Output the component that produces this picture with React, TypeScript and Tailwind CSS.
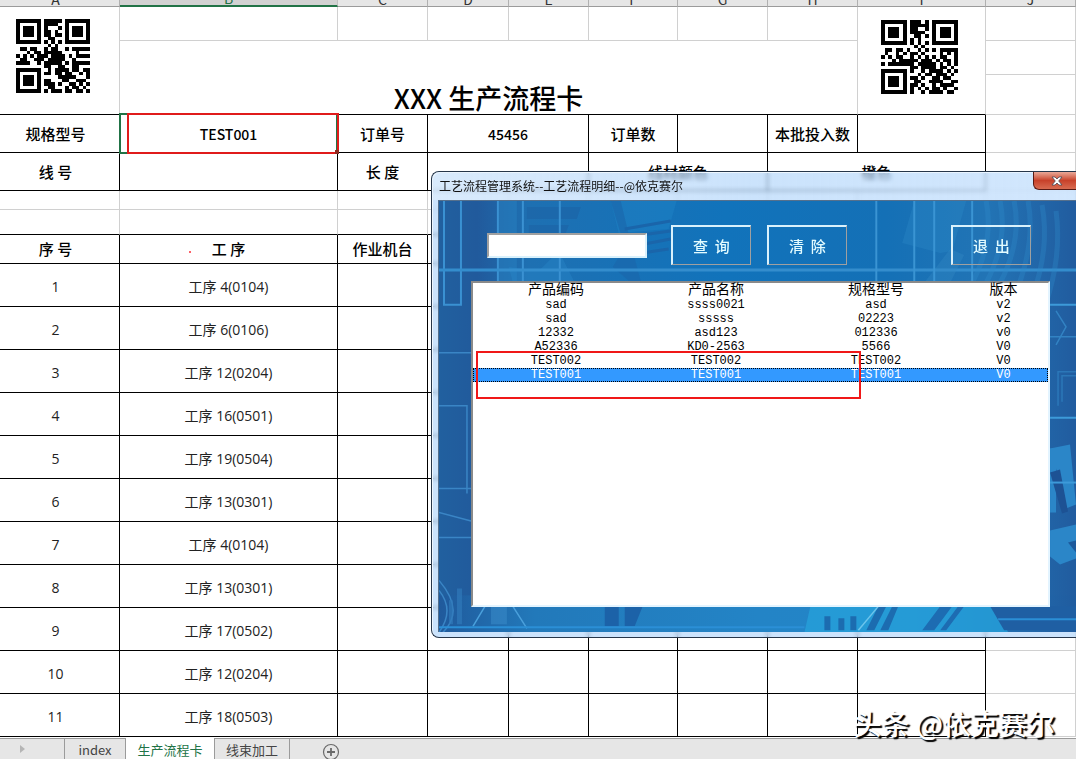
import { Fragment, type ReactNode } from 'react';

const QR_MODEL = [
    '111111101111101111111',
    '100000101111001000001',
    '101110101000101011101',
    '101110101101001011101',
    '101110101101101011101',
    '100000100110001000001',
    '111111101010101111111',
    '000000000101000000000',
    '011011001011001011111',
    '000101101111100001000',
    '101010111011110101111',
    '011001110111110010000',
    '111100101111101011111',
    '000000001100110011000',
    '111111100101111011011',
    '100000101101101100101',
    '101110100000111110001',
    '101110101100011001110',
    '101110101110100110101',
    '100000100110001011010',
    '111111101011101101101',
];

const QR_ORDER = [
    '111111101110101111111',
    '100000101111101000001',
    '101110101100101011101',
    '101110101111001011101',
    '101110100110101011101',
    '100000101010001000001',
    '111111101010101111111',
    '000000000101000000000',
    '011011010010101011111',
    '010010101101000010101',
    '101011001010101011001',
    '000101111101110101101',
    '101111111011111010101',
    '000000001101111011010',
    '111111101001011110101',
    '100000100010110111010',
    '101110101101001101100',
    '101110100110011110011',
    '101110101101001011110',
    '100000101010101101001',
    '111111101001011110110',
];

function QrCode({ rows, label }: { rows: string[]; label: string }) {
    return (
        <svg
            viewBox="0 0 21 21"
            preserveAspectRatio="none"
            shapeRendering="crispEdges"
            role="img"
            aria-label={label}
            className="w-full h-full"
        >
            {rows.map((row, y) => (
                <Fragment key={y}>
                    {row.split('').map((bit, x) =>
                        bit === '1' ? <rect key={x} x={x} y={y} width="1" height="1" /> : null
                    )}
                </Fragment>
            ))}
        </svg>
    );
}

const steps = [
    '工序 4(0104)',
    '工序 6(0106)',
    '工序 12(0204)',
    '工序 16(0501)',
    '工序 19(0504)',
    '工序 13(0301)',
    '工序 4(0104)',
    '工序 13(0301)',
    '工序 17(0502)',
    '工序 12(0204)',
    '工序 18(0503)',
];

const products = [
    ['sad', 'ssss0021', 'asd', 'v2'],
    ['sad', 'sssss', '02223', 'v2'],
    ['12332', 'asd123', '012336', 'v0'],
    ['A52336', 'KD0-2563', '5566', 'V0'],
    ['TEST002', 'TEST002', 'TEST002', 'V0'],
    ['TEST001', 'TEST001', 'TEST001', 'V0'],
];

const columns = ['A', 'B', 'C', 'D', 'E', 'F', 'G', 'H', 'I', 'J'];

const grid = 'p-0 border-r border-b border-[#d0d0d0]';
const line = 'p-0 border-r border-b border-black text-center leading-5';
const step = "p-0 pt-1 border-r border-b border-black text-center text-sm leading-5 font-['Open_Sans','Noto_Sans_CJK_SC',sans-serif]";

function Sheet() {
    return (
        <table className="w-full table-fixed border-separate border-spacing-0">
            <colgroup>
                <col className="w-[120px]" />
                <col className="w-[218px]" />
                <col className="w-[90px]" />
                <col className="w-[81px]" />
                <col className="w-[80px]" />
                <col className="w-[89px]" />
                <col className="w-[90px]" />
                <col className="w-[90px]" />
                <col className="w-[128px]" />
                <col />
            </colgroup>
            <thead>
                <tr>
                    {columns.map((name) => (
                        <th
                            key={name}
                            scope="col"
                            className={
                                name === 'B'
                                    ? 'p-0 bg-[#d2d2d2] border-r border-r-[#c0c0c0] border-b-2 border-b-[#217346] text-[#217346] font-normal'
                                    : 'p-0 bg-[#e6e6e6] border-r border-b border-r-[#b0b0b0] border-b-[#9b9b9b] text-[#333] font-normal first:pr-2'
                            }
                        >
                            <div className={name === 'B' ? 'h-[5px] overflow-hidden flex items-end justify-center' : 'h-[6px] overflow-hidden flex items-end justify-center'}>
                                <span className="text-sm leading-[14px]">{name}</span>
                            </div>
                        </th>
                    ))}
                </tr>
            </thead>
            <tbody>
                {/* Title block */}
                <tr className="h-[34px]">
                    <td rowSpan={3} className="p-0 border-r border-b border-r-[#d0d0d0] border-b-black align-top">
                        <div className="ml-4 mt-3 w-[74px] h-[74px]">
                            <QrCode rows={QR_MODEL} label="TEST001" />
                        </div>
                    </td>
                    {columns.slice(1, 8).map((name) => (
                        <td key={name} className={grid} />
                    ))}
                    <td rowSpan={3} className="p-0 border-r border-b border-r-[#d0d0d0] border-b-black align-top">
                        <div className="ml-[23px] mt-[13px] w-[77px] h-[74px]">
                            <QrCode rows={QR_ORDER} label="45456" />
                        </div>
                    </td>
                    <td className={grid} />
                </tr>
                <tr className="h-[34px]">
                    <td colSpan={7} rowSpan={2} className="p-0 border-r border-b border-r-[#d0d0d0] border-b-black align-bottom text-center">
                        <h1 className="pb-0.5 text-[27px] leading-7 font-medium">XXX 生产流程卡</h1>
                    </td>
                    <td className={grid} />
                </tr>
                <tr className="h-10">
                    <td className={grid} />
                </tr>

                {/* Order data */}
                <tr className="h-[38px] text-[15px] font-medium">
                    <td className={line}><div className="pr-2">规格型号</div></td>
                    <td className={`${line} relative text-sm`}>
                        TEST001
                        <span className="absolute -left-px -right-px -top-0.5 -bottom-0.5 border-2 border-[#217346]" />
                        <span className="absolute left-[7px] -right-0.5 -top-0.5 -bottom-0.5 border-2 border-[#e01b1b]" />
                        <span className="absolute -right-0.5 -bottom-0.5 size-1 bg-[#8c2a20]" />
                    </td>
                    <td className={line}>订单号</td>
                    <td className={`${line} text-sm`} colSpan={2}>45456</td>
                    <td className={line}>订单数</td>
                    <td className={line} />
                    <td className={line}>本批投入数</td>
                    <td className={line} />
                    <td className={grid} />
                </tr>
                <tr className="h-[38px] text-[15px] font-medium">
                    <td className={line}><div className="pr-2">线 号</div></td>
                    <td className={line} />
                    <td className={line}>长 度</td>
                    <td className={line} colSpan={2} />
                    <td className={line} colSpan={2}>线材颜色</td>
                    <td className={line} colSpan={2}>橙色</td>
                    <td className={grid} />
                </tr>
                <tr className="h-[19px]">
                    {columns.map((name) => (
                        <td key={name} className={grid} />
                    ))}
                </tr>
                <tr className="h-[25px]">
                    {columns.slice(0, 9).map((name) => (
                        <td key={name} className="p-0 border-r border-b border-r-[#d0d0d0] border-b-black" />
                    ))}
                    <td className={grid} />
                </tr>

                {/* Process steps */}
                <tr className="h-[29px] text-[15px] font-medium">
                    <td className={line}><div className="pr-2">序 号</div></td>
                    <td className={`${line} relative`}>
                        工 序
                        <span className="absolute left-[69px] top-4 size-0.5 rounded-full bg-red-500" />
                    </td>
                    <td className={line}>作业机台</td>
                    {columns.slice(3, 9).map((name) => (
                        <td key={name} className={line} />
                    ))}
                    <td className={grid} />
                </tr>
                {steps.map((name, i) => (
                    <tr key={i} className="h-[43px] text-[#222]">
                        <td className={step}><div className="pr-2">{i + 1}</div></td>
                        <td className={step}>{name}</td>
                        {columns.slice(2, 9).map((col) => (
                            <td key={col} className={line} />
                        ))}
                        <td className={grid} />
                    </tr>
                ))}
            </tbody>
        </table>
    );
}

function SheetTabs() {
    return (
        <nav className="mt-px h-[21px] bg-[#e6e6e6] border-t border-[#9b9b9b] flex items-stretch text-[13px] leading-5 text-[#444]">
            <div className="w-16 pl-5 flex items-center">
                <svg viewBox="0 0 5 8" className="w-[5px] h-2" fill="#b5b5b5">
                    <path d="M0 0l5 4-5 4z" />
                </svg>
            </div>
            <button className="w-[62px] pt-px border-l border-r border-[#9b9b9b]">index</button>
            <button className="w-[88px] -mt-px pt-0.5 bg-white text-[#217346]">生产流程卡</button>
            <button className="w-[76px] pt-px border-l border-r border-[#9b9b9b]">线束加工</button>
            <button aria-label="新工作表" className="ml-8 pt-1">
                <svg viewBox="0 0 18 18" className="size-[18px]" fill="none" stroke="#6a6a6a">
                    <circle cx="9" cy="9" r="7.5" strokeWidth="1.2" />
                    <path d="M9 5v8M5 9h8" strokeWidth="1.8" />
                </svg>
            </button>
        </nav>
    );
}

function CircuitBackdrop() {
    return (
        <svg
            viewBox="0 0 638 432"
            preserveAspectRatio="xMinYMin slice"
            aria-hidden="true"
            className="absolute inset-0 w-full h-full"
        >
            <defs>
                <linearGradient id="sea" x1="0" x2="1" y1="0" y2="0">
                    <stop offset="0" stopColor="#21609f" />
                    <stop offset="0.06" stopColor="#215a9c" />
                    <stop offset="0.14" stopColor="#1e70b2" />
                    <stop offset="0.45" stopColor="#1173bb" />
                    <stop offset="0.7" stopColor="#1470b6" />
                    <stop offset="0.86" stopColor="#2274b5" />
                    <stop offset="1" stopColor="#215c9f" />
                </linearGradient>
                <linearGradient id="floor" x1="0" x2="1" y1="0" y2="0">
                    <stop offset="0" stopColor="#205a9c" />
                    <stop offset="0.15" stopColor="#2279ba" />
                    <stop offset="0.5" stopColor="#2384c6" />
                    <stop offset="0.75" stopColor="#2385c8" />
                    <stop offset="1" stopColor="#205c9f" />
                </linearGradient>
            </defs>
            <rect width="638" height="432" fill="url(#sea)" />
            <rect y="395" width="638" height="37" fill="url(#floor)" />

            {/* upper left shapes */}
            <path d="M60 0h18v82H60z" fill="#2882c2" opacity=".5" />
            <path d="M88 6h54l-4 12H88zM90 24h40l-3 8H90z" fill="#1c62a5" opacity=".6" />
            <path d="M172 0h66l-8 28-50 4z" fill="#238aca" opacity=".35" />
            <path d="M172 0l14 46-12 20 16 14h12l-8-30-12-50z" fill="#1a65aa" opacity=".6" />
            <path d="M186 28l46-8M188 36l44-6M190 46l42-8M190 54l40-6" stroke="#1a65aa" strokeWidth="3" />
            <path d="M70 66l30 4 20-20 16 32H74z" fill="#2c8aca" opacity=".35" />
            <path d="M5 0v104h17V0M59 0v82M84 0v82M121 0v82" stroke="#3a91d2" strokeWidth="2" fill="none" />
            <path d="M0 69h638" stroke="#348dcd" strokeWidth="3" />

            {/* upper right shapes */}
            <path d="M476 0h52l-14 50-12 2-38-10z" fill="#2b87c5" opacity=".4" />
            <path d="M486 82l26-34 14 6-14 28z" fill="#3186c4" opacity=".4" />
            <g stroke="#2f8aca" strokeWidth="5" fill="none" opacity=".35">
                <path d="M548 0q8 40-14 82" />
                <path d="M562 0q8 40-14 82" />
                <path d="M576 0q8 40-14 82" />
                <path d="M590 0q8 44-14 96" />
                <path d="M604 4q8 44-10 92" />
                <path d="M618 10q6 44-10 92" />
            </g>
            <path d="M438 0v82M476 0v82M496 0v82M534 0v82" stroke="#3a94d3" strokeWidth="2" />

            {/* left edge */}
            <g stroke="#3a85c5" strokeWidth="1.5" fill="none">
                <path d="M0 152h34M0 205h28v88M0 288h34M0 312l34 9M0 337h34" />
                <path d="M0 380q26 30 4 52M0 390q16 20 0 42" />
            </g>
            <path d="M18 388h5v36h-5zM10 400h4v24h-4z" fill="#3179b9" opacity=".7" />

            {/* right edge */}
            <g stroke="#3d9ad9" strokeWidth="1.5" fill="none">
                <path d="M612 104h26M612 217h26" strokeWidth="2" />
                <path d="M612 136h26M618 110l10 16-10 18" opacity=".6" />
                <path d="M620 205v-34h18M624 201v-26h14" opacity=".4" />
            </g>
            <path d="M612 248l20-4 6 60-10 4-10-40-6 2z" fill="#2b86c8" />
            <path d="M612 248h6v64h-6z" fill="#2b86c8" />
            <path d="M612 272l10-3 8 42-6 2z" fill="#1d5294" />
            <path d="M612 282h26" stroke="#3d9ad9" strokeWidth="2" />
            <path d="M612 330l26-6v34l-16 6-10-8z" fill="#2b86c8" />
            <path d="M630 342l8-2v12z" fill="#1d5a9c" />

            {/* bottom strip */}
            <path d="M166 406h14v20h-14zM186 406h8v20h-8zM194 406h10l-8 20h-8z" fill="#1c62a8" />
            <path d="M34 426l12-20M74 406l14 22" stroke="#4aa0dc" strokeWidth="1.5" />
            <path d="M52 406h16v18H52z" fill="#3b8dcc" opacity=".5" />
            <path d="M372 406h186l12 26H366z" fill="#26a0da" opacity=".8" />
            <path d="M386 416h6v14h-6zM400 418h6v12h-6zM412 416h6v14h-6zM440 406h8l-12 24h-8zM454 406h6l-10 24h-8z" fill="#1c6cb0" />
            <path d="M502 406h12l-18 24h-12zM520 406h6l-18 24h-6z" fill="#1d6cb2" />
            <path d="M552 406h86v24H566z" fill="#1f5fa3" />
            <path d="M420 430l20-24" stroke="#6cc4ec" strokeWidth="1.5" />
            <path d="M0 427h366M560 419h78" stroke="#2b8fd6" strokeWidth="2" />
        </svg>
    );
}

function FormButton({ children }: { children: ReactNode }) {
    return (
        <button className="w-20 h-10 border-t-2 border-l-2 border-r border-b border-t-[#d9f1fc] border-l-[#d9f1fc] border-r-[#a0a0a0] border-b-[#a0a0a0] text-[#e2fbff] text-[15px] leading-5 font-medium">
            {children}
        </button>
    );
}

function ProcessDialog() {
    return (
        <section
            role="dialog"
            aria-labelledby="dialog-title"
            className="absolute left-[431px] right-0 top-[171px] h-[467px] flex flex-col overflow-hidden rounded-l-lg border border-r-0 border-[#26364a] bg-[#a8d0fa]/60 backdrop-blur-[2px] shadow-[inset_1px_1px_0_#eef7ff]"
        >
            <header className="h-7 shrink-0 pl-[7px] flex items-start justify-between bg-linear-to-r from-[#e6f1fc]/50 via-transparent to-[#dcecff]/40">
                <h2 id="dialog-title" className="text-xs leading-7 text-[#111]">
                    工艺流程管理系统--工艺流程明细--@依克赛尔
                </h2>
                <button
                    aria-label="关闭"
                    className="w-[43px] h-[18px] pl-1 flex items-center justify-center rounded-bl-md border border-t-0 border-r-0 border-[#5a1a14] bg-linear-to-b from-[#e8a898] via-[#c8412a] via-50% to-[#d86a50]"
                >
                    <svg viewBox="0 0 12 10" className="w-3 h-2.5">
                        <path
                            d="M1 1h3l2 2 2-2h3L7.700 5 11 9H8L6 7 4 9H1l3.300-4z"
                            fill="#fff"
                            stroke="#4a4a55"
                            strokeWidth=".8"
                        />
                    </svg>
                </button>
            </header>
            <div className="relative flex-1 ml-1.5 mb-[5px] border-t border-l border-[#56708c] overflow-hidden">
                <CircuitBackdrop />
                <div className="relative h-full pt-6 pl-8 pr-[26px] pb-[25px] flex flex-col">
                    <div className="pl-4 pr-[19px] flex items-center">
                        <input
                            type="text"
                            aria-label="查询条件"
                            className="w-40 h-[25px] mr-6 px-1 bg-white border-2 border-t-[#a0a0a0] border-l-[#a0a0a0] border-r-[#d9f1fc] border-b-[#d9f1fc] text-xs"
                        />
                        <div className="flex gap-4">
                            <FormButton>查&nbsp; 询</FormButton>
                            <FormButton>清&nbsp; 除</FormButton>
                        </div>
                        <div className="ml-auto">
                            <FormButton>退&nbsp; 出</FormButton>
                        </div>
                    </div>

                    {/* Result list */}
                    <div className="relative flex-1 mt-4 bg-white border-2 border-t-[#8a8a8a] border-l-[#8a8a8a] border-r-[#e3f4ff] border-b-[#e3f4ff]">
                        <table className="w-full table-fixed border-separate border-spacing-0 font-['Liberation_Mono','Noto_Sans_CJK_SC',monospace] text-xs leading-[14px] text-black text-center">
                            <colgroup>
                                <col className="w-[166px]" />
                                <col className="w-[154px]" />
                                <col className="w-[166px]" />
                                <col />
                            </colgroup>
                            <thead>
                                <tr className="h-[15px] text-sm leading-[15px]">
                                    <th className="p-0 font-normal">产品编码</th>
                                    <th className="p-0 font-normal">产品名称</th>
                                    <th className="p-0 font-normal">规格型号</th>
                                    <th className="p-0 font-normal">版本</th>
                                </tr>
                            </thead>
                            <tbody>
                                {products.map((row, i) => (
                                    <tr
                                        key={i}
                                        className={
                                            i === products.length - 1
                                                ? 'h-[14px] bg-[#3399ff] text-white outline-1 -outline-offset-1 outline-dotted outline-black'
                                                : 'h-[14px]'
                                        }
                                    >
                                        {row.map((cell, j) => (
                                            <td key={j} className="p-0">{cell}</td>
                                        ))}
                                    </tr>
                                ))}
                            </tbody>
                        </table>
                        <span className="absolute left-[3px] top-[68px] w-[385px] h-12 border-2 border-[#f01818]" />
                    </div>
                </div>
            </div>
        </section>
    );
}

export default function App() {
    return (
        <main className="relative overflow-hidden bg-white text-black font-['Noto_Sans_CJK_SC',sans-serif]">
            <Sheet />
            <SheetTabs />
            <ProcessDialog />
            <p className="absolute right-[21px] bottom-4 text-[28px] leading-10 font-medium text-white [text-shadow:2px_2px_1px_#000]">
                头条 @依克赛尔
            </p>
        </main>
    );
}
